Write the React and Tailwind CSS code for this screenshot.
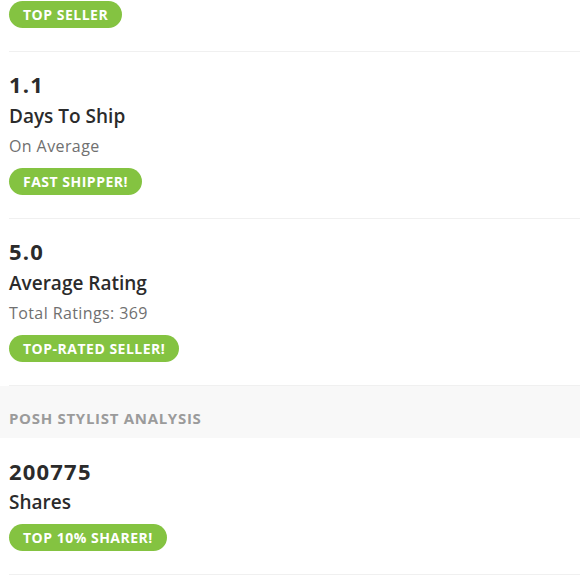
const font = { fontFamily: '"Open Sans", Lato, sans-serif' }

const Badge = ({ children }) => (
  <div className="flex">
    <span className="inline-flex items-center h-[27px] px-[14px] rounded-full bg-[#84c341] text-white text-[14px] font-bold leading-none tracking-[0.5px]">
      {children}
    </span>
  </div>
)

const Stat = ({ value, label, sub, badge }) => (
  <div className="ml-[9px] border-b border-[#f0f0f0] pt-[18px] pb-[23px]">
    <div className="text-[22px] leading-[28px] font-bold text-[#2b2b2b] tracking-[1.2px]">{value}</div>
    <div className="mt-[5px] text-[19px] leading-[26px] font-semibold text-[#2b2b2b]">{label}</div>
    {sub && <div className="mt-[6px] text-[16px] leading-[22px] text-[#707070] tracking-[0.4px]">{sub}</div>}
    <div className={sub ? 'mt-[11px]' : 'mt-[9px]'}>
      <Badge>{badge}</Badge>
    </div>
  </div>
)

export default function App() {
  return (
    <div className="w-[580px] h-[580px] overflow-hidden bg-white" style={font}>
      <div className="ml-[9px] pt-[1px] pb-[23px] border-b border-[#f0f0f0]">
        <Badge>TOP SELLER</Badge>
      </div>

      <Stat value="1.1" label="Days To Ship" sub="On Average" badge="FAST SHIPPER!" />
      <Stat value="5.0" label="Average Rating" sub="Total Ratings: 369" badge="TOP-RATED SELLER!" />

      <div className="bg-[#f8f8f8] pl-[9px] pt-[22px] pb-[10px]">
        <div className="text-[15px] leading-[20px] font-bold text-[#9b9b9b] tracking-[0.7px]">
          POSH STYLIST ANALYSIS
        </div>
      </div>

      <div className="ml-[9px] border-b border-[#f0f0f0] pt-[19px] pb-[23px]">
        <div className="text-[22px] leading-[28px] font-bold text-[#2b2b2b] tracking-[1.2px]">200775</div>
        <div className="mt-[4px] text-[19px] leading-[26px] font-semibold text-[#2b2b2b]">Shares</div>
        <div className="mt-[9px]">
          <Badge>TOP 10% SHARER!</Badge>
        </div>
      </div>
    </div>
  )
}
